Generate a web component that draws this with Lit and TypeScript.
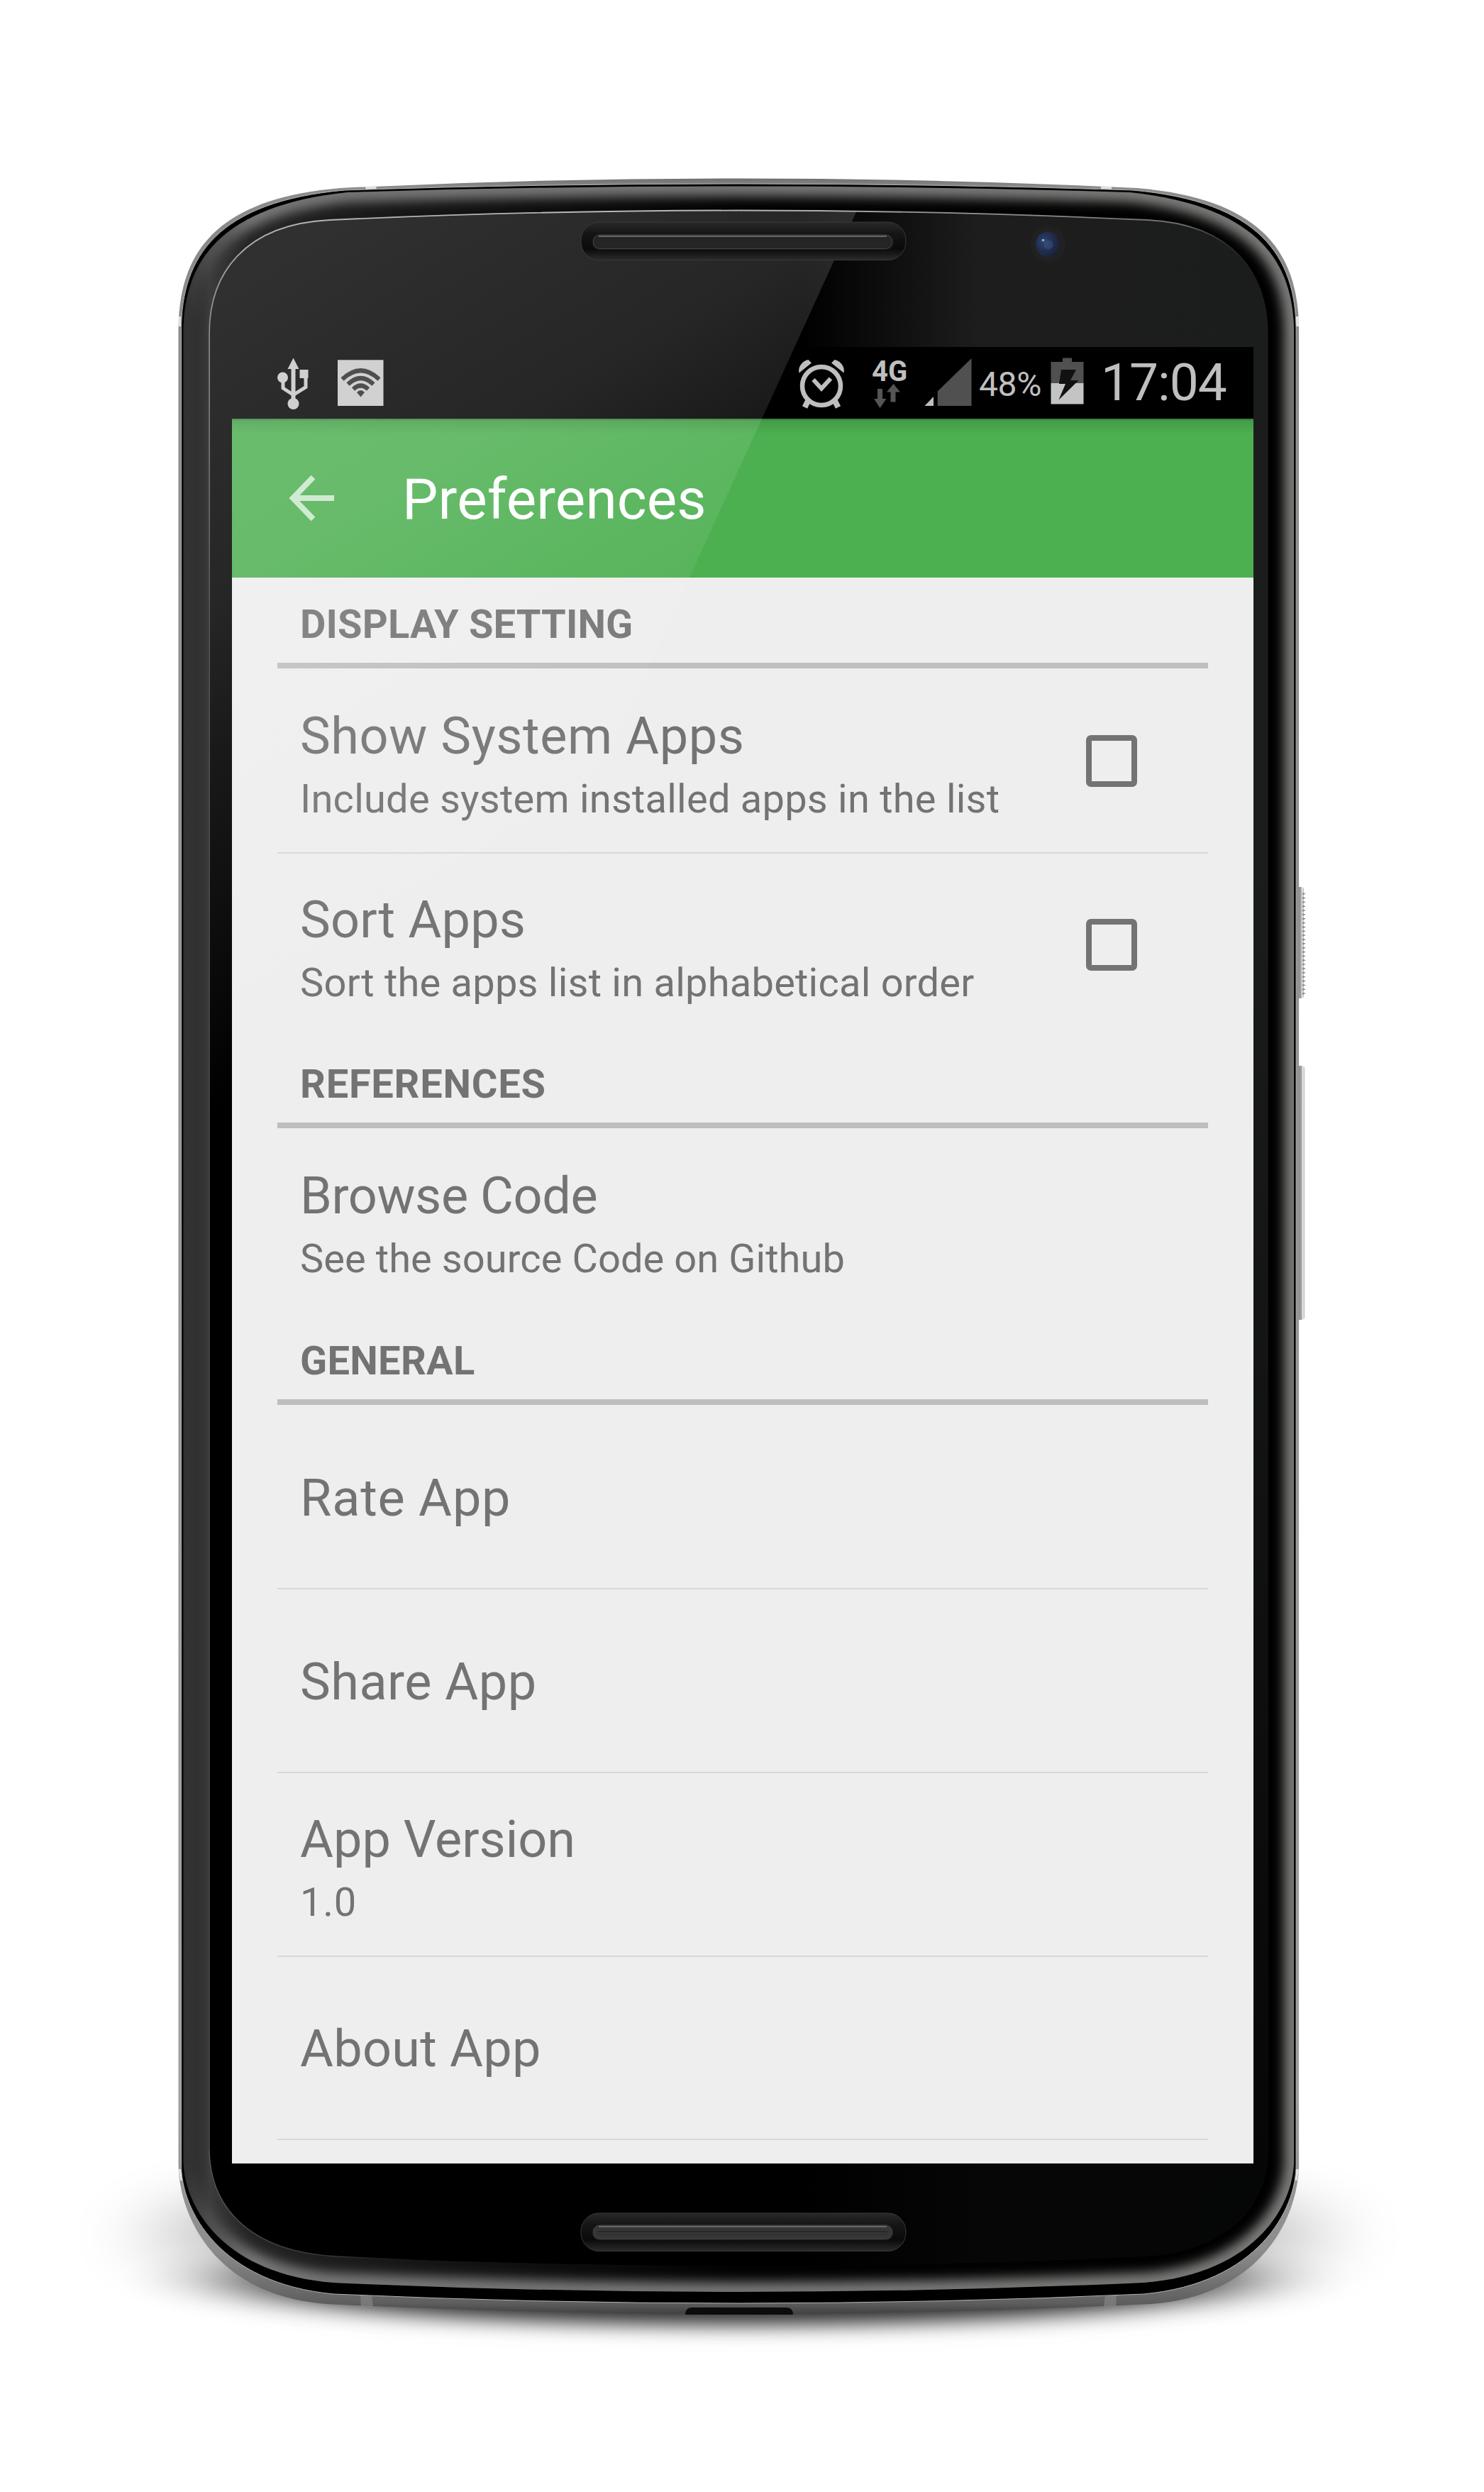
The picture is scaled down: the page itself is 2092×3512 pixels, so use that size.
import { LitElement, html, svg, css, nothing } from "lit";
import { customElement, property } from "lit/decorators.js";
import { styleMap } from "lit/directives/style-map.js";

type Point = [number, number];

interface Outline {
  x: number;
  top: number;
  topSide: number;
  topCurve: [Point, Point, Point];
  bottomSide: number;
  bottomCurve: [Point, Point, Point];
  bottom: number;
}

const AXIS = 1041.3;

/** Builds a closed body contour from its left half, mirrored around AXIS. */
function contour(o: Outline): string {
  const m = (p: Point): string => `${(2 * AXIS - p[0]).toFixed(1)} ${p[1]}`;
  const l = (p: Point): string => `${p[0]} ${p[1]}`;
  const [t1, t2, t3] = o.topCurve;
  const [b1, b2, b3] = o.bottomCurve;
  return [
    `M${l([o.x, o.topSide])}`,
    `C${l(t1)} ${l(t2)} ${l(t3)}`,
    `Q760 ${o.top} ${AXIS} ${o.top}`,
    `Q${m([760, o.top])} ${m(t3)}`,
    `C${m(t2)} ${m(t1)} ${m([o.x, o.topSide])}`,
    `L${m([o.x, o.bottomSide])}`,
    `C${m(b1)} ${m(b2)} ${m(b3)}`,
    `Q${m([760, o.bottom])} ${AXIS} ${o.bottom}`,
    `Q760 ${o.bottom} ${l(b3)}`,
    `C${l(b2)} ${l(b1)} ${l([o.x, o.bottomSide])}`,
    "Z",
  ].join(" ");
}

const METAL = contour({
  x: 251.5, top: 251.5, topSide: 465,
  topCurve: [[252, 360], [300, 280], [480, 265]],
  bottomSide: 3050,
  bottomCurve: [[252, 3120], [300, 3235], [460, 3247]],
  bottom: 3261,
});
const GASKET = contour({
  x: 255.5, top: 259, topSide: 465,
  topCurve: [[256, 362], [306, 284], [486, 268]],
  bottomSide: 3050,
  bottomCurve: [[255, 3115], [310, 3218], [470, 3233]],
  bottom: 3246,
});
const BEZEL = contour({
  x: 258.5, top: 262.5, topSide: 465,
  topCurve: [[260, 368], [311, 290], [490, 271]],
  bottomSide: 3045,
  bottomCurve: [[259, 3110], [315, 3205], [470, 3217]],
  bottom: 3230,
});
const GLASS = contour({
  x: 295, top: 296.5, topSide: 470,
  topCurve: [[295, 385], [345, 316], [465, 310]],
  bottomSide: 3030,
  bottomCurve: [[296, 3105], [345, 3173], [475, 3180]],
  bottom: 3193,
});

@customElement("device-body")
export class DeviceBody extends LitElement {
  static styles = css`
    :host {
      display: block;
    }
    .art {
      display: block;
      width: 2092px;
      height: 3512px;
    }
  `;

  render() {
    const ridges = Array.from({ length: 25 }, (_, i) => 1258 + i * 5.85);
    return html`
      <svg class="art" viewBox="0 0 2092 3512" aria-hidden="true">
        <defs>
          <filter id="far" x="-20%" y="-100%" width="140%" height="300%">
            <feGaussianBlur stdDeviation="60 38" />
          </filter>
          <filter id="near" x="-20%" y="-100%" width="140%" height="300%">
            <feGaussianBlur stdDeviation="80 14" />
          </filter>
          <filter id="soft" filterUnits="userSpaceOnUse" x="200" y="200" width="1700" height="3120">
            <feGaussianBlur stdDeviation="8" />
          </filter>
          <linearGradient id="metal" gradientUnits="userSpaceOnUse" x1="0" y1="251" x2="0" y2="3261">
            <stop offset="0" stop-color="#6e6e6e" />
            <stop offset="0.004" stop-color="#8c8c8c" />
            <stop offset="0.03" stop-color="#8a8a8a" />
            <stop offset="0.9" stop-color="#a0a0a0" />
            <stop offset="0.97" stop-color="#8c8c8c" />
            <stop offset="0.988" stop-color="#6c6c6c" />
            <stop offset="0.995" stop-color="#5e5e5e" />
            <stop offset="1" stop-color="#404040" />
          </linearGradient>
          <linearGradient id="rim" gradientUnits="userSpaceOnUse" x1="258" y1="0" x2="1824" y2="0">
            <stop offset="0" stop-color="#1c1c1c" />
            <stop offset="0.024" stop-color="#3c3c3c" />
            <stop offset="0.06" stop-color="#242424" />
            <stop offset="0.2" stop-color="#161616" />
            <stop offset="0.5" stop-color="#020202" />
            <stop offset="1" stop-color="#000" />
          </linearGradient>
          <linearGradient id="rimGlow" gradientUnits="userSpaceOnUse" x1="258" y1="0" x2="1824" y2="0">
            <stop offset="0" stop-color="#444" stop-opacity="0.5" />
            <stop offset="0.06" stop-color="#777" />
            <stop offset="0.5" stop-color="#777" />
            <stop offset="1" stop-color="#7c7c7a" />
          </linearGradient>
          <linearGradient id="glassX" gradientUnits="userSpaceOnUse" x1="1130" y1="0" x2="1788" y2="0">
            <stop offset="0" stop-color="#000" />
            <stop offset="0.38" stop-color="#1d1d1d" />
            <stop offset="1" stop-color="#1b1d1c" />
          </linearGradient>
          <linearGradient id="glassY" gradientUnits="userSpaceOnUse" x1="0" y1="1200" x2="0" y2="3060">
            <stop offset="0" stop-color="#000" stop-opacity="0" />
            <stop offset="1" stop-color="#000" stop-opacity="0.8" />
          </linearGradient>
          <linearGradient id="edge" gradientUnits="userSpaceOnUse" x1="0" y1="297" x2="0" y2="3190">
            <stop offset="0" stop-color="#b0b0b0" />
            <stop offset="0.06" stop-color="#7a7a7a" />
            <stop offset="0.2" stop-color="#444" />
            <stop offset="1" stop-color="#444" />
          </linearGradient>
          <linearGradient id="edgeRight" gradientUnits="userSpaceOnUse" x1="1041" y1="0" x2="1780" y2="0">
            <stop offset="0" stop-color="#b0b0b0" />
            <stop offset="0.6" stop-color="#8a8a8a" />
            <stop offset="0.85" stop-color="#6a6a6a" />
            <stop offset="1" stop-color="#333" stop-opacity="0" />
          </linearGradient>
          <linearGradient id="edgeBottom" gradientUnits="userSpaceOnUse" x1="295" y1="0" x2="600" y2="0">
            <stop offset="0" stop-color="#555" />
            <stop offset="0.6" stop-color="#333" />
            <stop offset="1" stop-color="#222" stop-opacity="0" />
          </linearGradient>
          <linearGradient id="button" x1="0" y1="0" x2="1" y2="0">
            <stop offset="0" stop-color="#777" />
            <stop offset="0.6" stop-color="#a4a4a4" />
            <stop offset="0.8" stop-color="#f4f4f4" />
            <stop offset="1" stop-color="#aaa" />
          </linearGradient>
          <clipPath id="bezelClip"><path d=${BEZEL} /></clipPath>
        </defs>

        <ellipse cx="1041" cy="3150" rx="830" ry="92" fill="#000" opacity="0.27" filter="url(#far)" />
        <ellipse cx="1041" cy="3214" rx="700" ry="62" fill="#000" opacity="0.82" filter="url(#near)" />

        <rect x="1828" y="1250" width="10" height="157" rx="3" fill="url(#button)" />
        ${ridges.map((y) => svg`<path d="M1836 ${y}l5 1.600l-5 2z" fill="#8c8c8c" />`)}
        <rect x="1828" y="1502" width="11" height="358" rx="4" fill="url(#button)" />

        <path d=${METAL} fill="url(#metal)" />
        <g fill="#e2e2e2">
          <path d="M515.500 263l15-1v5l-15 1z" />
          <path d="M1567 263l-15-1v5l15 1z" />
          <rect x="251.500" y="446" width="4" height="14" />
          <rect x="1827" y="446" width="4" height="14" />
          <path d="M251.500 3057h4l1.500 16h-3z" />
          <path d="M1831 3057h-4l-1.500 16h3z" />
        </g>
        <g fill="#8a8a8a" opacity="0.6">
          <path d="M508 3234h16l2 17h-17z" />
          <path d="M1574 3234h-16l-2 17h17z" />
        </g>
        <path d="M966 3262c0-7 4-10 10-10h132c6 0 10 3 10 10z" fill="#0c0c0c" />
        <path d=${GASKET} fill="#000" stroke="#b4b4b4" stroke-width="1" />
        <path d=${BEZEL} fill="url(#rim)" />
        <g clip-path="url(#bezelClip)">
          <path d=${BEZEL} fill="none" stroke="url(#rimGlow)" stroke-width="28" filter="url(#soft)" />
        </g>
        <path d=${GLASS} fill="#000" />
        <path d=${GLASS} fill="url(#glassX)" />
        <path d=${GLASS} fill="url(#glassY)" />
        <path d="M295 3030V470C295 385 345 316 465 310Q760 296.500 1041.300 296.500"
          fill="none" stroke="url(#edge)" stroke-width="1.800" />
        <path d="M1041.300 296.500Q1322.600 296.500 1617.600 310C1737.600 316 1787.600 385 1787.600 470"
          fill="none" stroke="url(#edgeRight)" stroke-width="1.800" />
        <path d="M295 3030C296 3105 345 3173 475 3180L600 3186" fill="none" stroke="url(#edgeBottom)" stroke-width="1.500" />
      </svg>
    `;
  }
}

@customElement("device-glass")
export class DeviceGlass extends LitElement {
  static styles = css`
    :host {
      display: block;
    }
    .art {
      display: block;
      width: 2092px;
      height: 3512px;
    }
  `;

  private grille(y: number, inner: number, lit: string) {
    return svg`
      <rect x="819" y=${y} width="458" height="53.500" rx="25" ry="26" fill="url(#well)" stroke="#383838" stroke-width="1" />
      <rect x="835" y=${inner} width="424" height="21.500" rx="10" fill=${lit} stroke="#161616" stroke-width="2" />
      <rect x="836.500" y=${inner + 1} width="421" height="19.500" rx="9" fill="none" stroke="#444" stroke-width="1" />
      <path d="M844 ${inner + 3}H1250" stroke="#666" stroke-width="2" />
      <path d="M842 ${inner + 10}H1252" stroke="#262626" stroke-width="1.500" />
      <path d="M842 ${inner + 14}H1252" stroke="#2a2a2a" stroke-width="1" />
    `;
  }

  render() {
    return html`
      <svg class="art" viewBox="0 0 2092 3512" aria-hidden="true">
        <defs>
          <linearGradient id="glare" gradientUnits="userSpaceOnUse" x1="257.500" y1="429" x2="772.500" y2="1287">
            <stop offset="0" stop-color="#fff" stop-opacity="0.19" />
            <stop offset="0.18" stop-color="#fff" stop-opacity="0.17" />
            <stop offset="0.38" stop-color="#fff" stop-opacity="0.15" />
            <stop offset="0.49" stop-color="#fff" stop-opacity="0.12" />
            <stop offset="0.56" stop-color="#fff" stop-opacity="0.1" />
            <stop offset="0.7" stop-color="#fff" stop-opacity="0.07" />
            <stop offset="1" stop-color="#fff" stop-opacity="0" />
          </linearGradient>
          <linearGradient id="well" x1="0" y1="0" x2="0" y2="1">
            <stop offset="0" stop-color="#292929" />
            <stop offset="0.3" stop-color="#151515" />
            <stop offset="0.7" stop-color="#0a0a0a" />
            <stop offset="1" stop-color="#2b2b2b" />
          </linearGradient>
          <radialGradient id="lens" cx="0.35" cy="0.4" r="0.7">
            <stop offset="0" stop-color="#2b4672" />
            <stop offset="0.5" stop-color="#222e50" />
            <stop offset="1" stop-color="#1a2032" />
          </radialGradient>
          <clipPath id="glassClip"><path d=${GLASS} /></clipPath>
        </defs>
        <path d="M290 290H1211L627 1570H290Z" fill="url(#glare)" clip-path="url(#glassClip)" />
        ${this.grille(313, 330, "#242424")}
        ${this.grille(3119, 3135, "#363636")}
        <circle cx="1477.500" cy="344" r="25" fill="#212121" />
        <ellipse cx="1477" cy="344.500" rx="17" ry="18" fill="url(#lens)" />
        <circle cx="1478" cy="345" r="6.500" fill="#42588a" opacity="0.45" />
        <ellipse cx="1470.500" cy="338.500" rx="2" ry="1.800" fill="#9aa4b4" />
      </svg>
    `;
  }
}

@customElement("status-bar")
export class StatusBar extends LitElement {
  static styles = css`
    :host {
      display: flex;
      justify-content: space-between;
      height: 101px;
      box-sizing: border-box;
      padding: 0 36px 0 62px;
      background: #000;
      color: #bfbfbf;
      font-family: Roboto, sans-serif;
      white-space: nowrap;
    }
    .group {
      display: flex;
    }
    .icon {
      display: block;
      height: 101px;
      flex: none;
    }
    .percent {
      width: 101px;
      padding-left: 9px;
      box-sizing: border-box;
      font-size: 48px;
      line-height: 106px;
      letter-spacing: -0.4px;
    }
    .time {
      width: 179px;
      margin-left: 24px;
      font-size: 73px;
      line-height: 100px;
      letter-spacing: -1px;
    }
    .network {
      position: relative;
      width: 52px;
      height: 101px;
      margin: 0 23px 0 36px;
    }
    .label {
      display: block;
      padding-left: 1px;
      font-size: 40px;
      font-weight: 700;
      line-height: 69px;
    }
    .arrows {
      position: absolute;
      left: 0;
      top: 0;
    }
  `;

  render() {
    return html`
      <div class="group">
        <svg class="icon" width="49" viewBox="389 489 49 101">
          <g fill="#c6c6c6">
            <path d="M413.500 504.500l8 15.500h-5v43h-6v-43h-5z" />
            <circle cx="413.500" cy="569" r="8" />
            <circle cx="398.500" cy="532" r="7.500" />
            <rect x="422.500" y="521" width="12" height="12" />
          </g>
          <path d="M399 534v13l14.500 9.500M431 531v14.500l-17.500 11" fill="none" stroke="#c6c6c6" stroke-width="5" />
        </svg>
        <svg class="icon" width="152" viewBox="438 489 152 101">
          <rect x="476" y="507.300" width="64.500" height="64.700" fill="#c8c8c8" />
          <g fill="none" stroke="#2c2c2c" stroke-width="6">
            <path d="M482.500 534.500Q508.500 510 534.500 534.500" />
            <path d="M490.500 541.500Q508.500 524.500 526.500 541.500" />
            <path d="M498 548.500Q508.500 538.500 519 548.500" />
          </g>
          <path d="M508.500 559.500l-5.500-6.500q5.500-6 11 0z" fill="#2c2c2c" />
        </svg>
      </div>
      <div class="group">
        <svg class="icon" width="72" viewBox="1121 489 72 101">
          <ellipse cx="1159" cy="544" rx="27" ry="27" fill="none" stroke="#bfbfbf" stroke-width="6.500" />
          <path d="M1147.500 535l11.500 12.500 13-14" fill="none" stroke="#bfbfbf" stroke-width="6" />
          <path d="M1127.500 525.500c-2-9 5-17 13-18.500l4.500 4.500zM1190.500 525.500c2-9-5-17-13-18.500l-4.500 4.500z" fill="#bfbfbf" />
          <path d="M1141 563l-5.500 11M1177 563l5.500 11" stroke="#bfbfbf" stroke-width="8" />
        </svg>
        <div class="network">
          <span class="label">4G</span>
          <svg class="icon arrows" width="52" viewBox="1228 489 52 101">
            <path d="M1237 548h7v14h5.500l-9 13-8.500-13h5zM1255.500 566.500h7v-14h6.500l-9.500-11.500-9.500 11.500h5.500z" fill="#555" />
          </svg>
        </div>
        <svg class="icon" width="68" viewBox="1303 489 68 101">
          <path d="M1303.500 572h12.500v-13z" fill="#bfbfbf" />
          <path d="M1321.700 572v-20.500L1369.500 505v67z" fill="#505050" />
        </svg>
        <span class="percent">48%</span>
        <svg class="icon" width="56" viewBox="1472 489 56 101">
          <path d="M1481.500 510h16.500v-5.500h13v5.500h16.500v30h-46z" fill="#505050" />
          <path d="M1481.500 540h46v29.500h-46z" fill="#c4c4c4" />
          <path d="M1496 521h21l-8 15h11.500l-28 27.500 9.500-22.500h-9z" fill="#111" />
        </svg>
        <span class="time">17:04</span>
      </div>
    `;
  }
}

@customElement("pref-row")
export class PrefRow extends LitElement {
  @property() heading = "";
  @property() summary = "";
  @property({ type: Boolean }) checkable = false;
  @property({ type: Number }) headingTracking = 0;
  @property({ type: Number }) summaryTracking = 0;

  static styles = css`
    :host {
      display: flex;
      align-items: center;
      justify-content: space-between;
      height: 256px;
      box-sizing: border-box;
      padding: 0 100px 0 32px;
      color: #737373;
      font-family: Roboto, sans-serif;
      white-space: nowrap;
    }
    .texts {
      display: flex;
      flex-direction: column;
      padding-top: 4px;
    }
    .heading {
      font-size: 72px;
      line-height: 84px;
    }
    .texts.double {
      padding-top: 9px;
    }
    .summary {
      margin-top: 14px;
      font-size: 56px;
      line-height: 65px;
    }
    .box {
      width: 72px;
      height: 73px;
      box-sizing: border-box;
      border: 8.5px solid #737373;
      border-radius: 7px;
    }
  `;

  render() {
    return html`
      <div class="texts ${this.summary ? "double" : ""}">
        <span class="heading" style=${styleMap({ letterSpacing: `${this.headingTracking}px` })}>${this.heading}</span>
        ${this.summary
          ? html`<span class="summary" style=${styleMap({ letterSpacing: `${this.summaryTracking}px` })}
              >${this.summary}</span
            >`
          : nothing}
      </div>
      ${this.checkable ? html`<span class="box" role="checkbox" aria-checked="false"></span>` : nothing}
    `;
  }
}

interface Item {
  heading: string;
  summary?: string;
  checkable?: boolean;
  /** Letter spacing in pixels for the heading and the summary. */
  tracking?: [number, number];
}

const SECTIONS: { title: string; tracking: number; items: Item[] }[] = [
  {
    title: "DISPLAY SETTING",
    tracking: 0.15,
    items: [
      {
        heading: "Show System Apps",
        summary: "Include system installed apps in the list",
        checkable: true,
        tracking: [0.58, 0.23],
      },
      {
        heading: "Sort Apps",
        summary: "Sort the apps list in alphabetical order",
        checkable: true,
        tracking: [0.2, 0.23],
      },
    ],
  },
  {
    title: "REFERENCES",
    tracking: 0.75,
    items: [{ heading: "Browse Code", summary: "See the source Code on Github", tracking: [-0.4, 0.07] }],
  },
  {
    title: "GENERAL",
    tracking: 0.3,
    items: [
      { heading: "Rate App", tracking: [0.8, 0] },
      { heading: "Share App", tracking: [0.5, 0] },
      { heading: "App Version", summary: "1.0", tracking: [0, 0.8] },
      { heading: "About App", tracking: [0.25, 0] },
    ],
  },
];

@customElement("app-root")
export class AppRoot extends LitElement {
  static styles = css`
    :host {
      display: block;
      position: relative;
      width: 2092px;
      height: 3512px;
      box-sizing: border-box;
      padding: 489px 325px 463px 327px;
      background: #fff;
      overflow: hidden;
      font-family: Roboto, sans-serif;
    }
    .body,
    .glass {
      position: absolute;
      left: 0;
      top: 0;
    }
    .glass {
      pointer-events: none;
    }
    .screen {
      position: relative;
      display: flex;
      flex-direction: column;
      height: 2560px;
      overflow: hidden;
      background: #eee;
    }
    .toolbar {
      display: flex;
      align-items: center;
      height: 224.300px;
      flex: none;
      padding-left: 80px;
      background: linear-gradient(rgba(0, 0, 0, 0.35), rgba(0, 0, 0, 0.1) 3px, rgba(0, 0, 0, 0) 22px), #4caf50;
      color: #fff;
    }
    .back {
      display: block;
      width: 64px;
      height: 66px;
      margin-right: 96px;
    }
    .title {
      font-size: 80px;
      line-height: 94px;
      padding-top: 4px;
      letter-spacing: 0.15px;
    }
    .list {
      flex: none;
      padding: 0 64px;
    }
    .section {
      display: flex;
      align-items: flex-end;
      height: 128px;
      box-sizing: border-box;
      padding: 0 32px 21px;
      border-bottom: 8px solid #bebebe;
      margin-bottom: 2.667px;
      color: #737373;
      font-size: 56px;
      font-weight: 700;
      line-height: 66px;
    }
    .rule {
      height: 2px;
      margin-bottom: 0.667px;
      background: #d8d8d8;
    }
    .rule.blank {
      background: none;
    }
  `;

  render() {
    return html`
      <device-body class="body"></device-body>
      <main class="screen">
        <status-bar></status-bar>
        <header class="toolbar">
          <svg class="back" viewBox="0 0 64 66" aria-label="Back">
            <path d="M64 33H7M34.500 3.500L6 33l28.500 29.500" fill="none" stroke="#fff" stroke-opacity="0.7" stroke-width="8" />
          </svg>
          <span class="title">Preferences</span>
        </header>
        <div class="list">
          ${SECTIONS.map(
            (s) => html`
              <div class="section" style=${styleMap({ letterSpacing: `${s.tracking}px` })}>${s.title}</div>
              ${s.items.map(
                (item, i) => html`
                  <pref-row
                    .heading=${item.heading}
                    .summary=${item.summary ?? ""}
                    .checkable=${item.checkable ?? false}
                    .headingTracking=${item.tracking?.[0] ?? 0}
                    .summaryTracking=${item.tracking?.[1] ?? 0}
                  ></pref-row>
                  <div class="rule ${i === s.items.length - 1 && s.title !== "GENERAL" ? "blank" : ""}"></div>
                `,
              )}
            `,
          )}
        </div>
      </main>
      <device-glass class="glass"></device-glass>
    `;
  }
}
